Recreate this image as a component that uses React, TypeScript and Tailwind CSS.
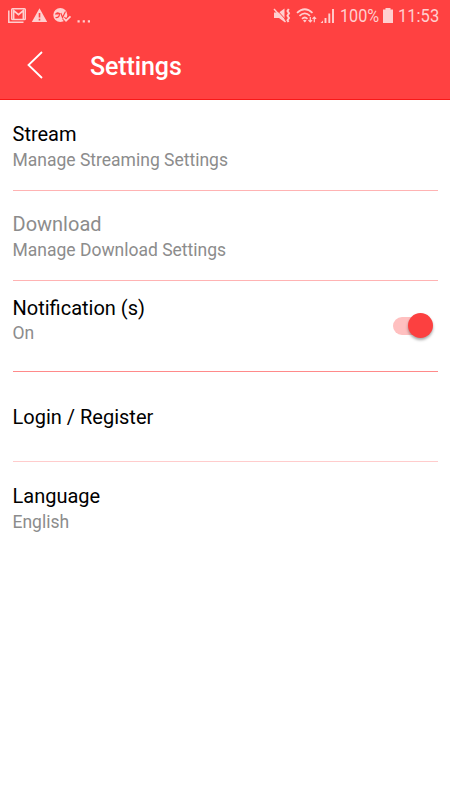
import React, { useState } from 'react';

interface SettingRowProps {
  title: string;
  subtitle?: string;
  className: string;
  muted?: boolean;
  onClick?: () => void;
  children?: React.ReactNode;
}

function StatusBar() {
  return (
    <div className="flex justify-between items-center h-8 text-[#ffcfcf]">
      {/* Notifications */}
      <svg className="w-[100px] h-8" viewBox="0 0 100 32" fill="none" stroke="currentColor">
        <path d="M8.800 10.500V22.200H23.500" strokeWidth="1.500" />
        <rect x="11.700" y="8.700" width="13.600" height="10.800" rx="0.800" strokeWidth="1.400" />
        <path d="M13.600 19V10.500L18.500 14.700L23.400 10.500V19" strokeWidth="1.700" />
        <path fill="currentColor" stroke="none" fillRule="evenodd" d="M39.500 8.200L47.200 22H31.800ZM38.700 13V17.500H40.300V13ZM38.700 18.800V20.400H40.300V18.800Z" />
        <circle cx="60.300" cy="15" r="7" fill="currentColor" stroke="none" />
        <path stroke="#ff4141" strokeWidth="1.200" d="M55 14H58.500M55.500 17.500Q59.500 18 59.500 13.500Q57 12 56 14M60.800 13L62.500 17.500L65.500 11.500" />
        <path stroke="#ff4141" strokeWidth="3.600" d="M63.500 18L66 20.800L71 15.500" />
        <path strokeWidth="1.700" d="M63.500 18.200L66 20.700L70.500 16.300" />
        <path fill="currentColor" stroke="none" d="M77.500 20.300h2.200v2.200h-2.200zM82.700 20.300h2.200v2.200h-2.200zM87.800 20.300h2.200v2.200h-2.200z" />
      </svg>

      <div className="flex items-center h-8">
        {/* Muted, wifi and signal */}
        <svg className="w-[67px] h-8" viewBox="270 0 67 32" fill="none" stroke="currentColor">
          <path fill="currentColor" stroke="none" d="M274 12.500H279L284.500 8.500V22L279 18H274Z" />
          <path stroke="#ff4141" strokeWidth="1" d="M276 9L286.500 20.500" />
          <path strokeWidth="1.400" d="M274 9L285.500 22" />
          <path strokeWidth="2" d="M288.800 9L287.500 11L289 13.300L287.500 15.700L289 18L287.500 20.300L288.500 22" />
          <path strokeWidth="1.700" d="M297 12.800Q304.800 5.700 312.500 12.800M299.500 15.900Q304.800 11 310 15.900M302 18.800Q304.800 16.200 307.500 18.800" />
          <path fill="currentColor" stroke="none" d="M303 20.600Q304.800 19 306.600 20.600L304.800 22.500Z" />
          <path strokeWidth="1.200" d="M310.300 17V22M308.500 20.100L310.300 22L312.100 20.100M314.300 22.200V17M312.500 18.900L314.300 17L316.100 18.900" />
          <path fill="currentColor" stroke="none" d="M320.500 23L323 20.500V23Z" />
          <path strokeWidth="1.900" d="M325.500 23V18M329.300 23V13.500M333 23V9" />
        </svg>
        <div className="w-[43px] pl-[3px]">
          <span className="block w-[44px] origin-left scale-x-[0.9] text-[18px] leading-8">100%</span>
        </div>
        <svg className="w-[18px] h-8" viewBox="380 0 18 32" fill="currentColor">
          <path d="M385.500 8H390.500V9.500H393V23H383V9.500H385.500Z" />
        </svg>
        <div className="w-[52px]">
          <span className="block w-[48px] origin-left scale-x-[0.92] text-[18px] leading-8">11:53</span>
        </div>
      </div>
    </div>
  );
}

function SettingRow({ title, subtitle, className, muted, onClick, children }: SettingRowProps) {
  return (
    <div onClick={onClick} className={`flex justify-between mx-[12.5px] border-b ${className}`}>
      <div>
        <div className={`text-[20px] leading-[26px] ${muted ? 'text-[#8c8c8c]' : 'text-black'}`}>{title}</div>
        {subtitle && <p className="text-[17.5px] leading-[25.5px] text-[#8c8c8c]">{subtitle}</p>}
      </div>
      {children}
    </div>
  );
}

export default function App() {
  const [notifications, setNotifications] = useState(true);

  return (
    <div className="w-full h-[800px] bg-white overflow-hidden font-['Roboto',sans-serif]">
      <header className="h-[100px] bg-[#ff4141] border-b border-[#f91818]">
        <StatusBar />
        <div className="flex items-center h-[67px]">
          <button className="w-[90px] h-full cursor-pointer" aria-label="Back">
            <svg className="w-[90px] h-[67px]" viewBox="0 32 90 67" fill="none" stroke="white" strokeWidth="1.800">
              <path d="M42 52L28.500 65L42 78" />
            </svg>
          </button>
          <h1 className="pt-[2px] text-white text-[25px] tracking-[-0.1px] font-medium leading-8">Settings</h1>
        </div>
      </header>

      <main>
        <SettingRow title="Stream" subtitle="Manage Streaming Settings" className="h-[91px] pt-[21px] border-[#ffb3b3] [&_p]:mt-px" />
        <SettingRow title="Download" subtitle="Manage Download Settings" muted className="h-[90px] pt-5 border-[#ffb3b3] [&_p]:mt-px" />
        <SettingRow
          title="Notification (s)"
          subtitle={notifications ? 'On' : 'Off'}
          className="h-[91px] pt-[14px] border-[#ff8a8a]"
        >
          <button
            role="switch"
            aria-checked={notifications}
            aria-label="Notifications"
            onClick={() => setNotifications(!notifications)}
            className={`flex items-center w-[36px] h-[18px] mt-[22px] mr-[8.5px] rounded-full cursor-pointer ${
              notifications ? 'justify-end bg-[#ffc0c0]' : 'bg-gray-300'
            }`}
          >
            <span className={`w-[25px] h-[25px] shrink-0 -mt-px rounded-full shadow-[0_2px_3px_rgba(0,0,0,0.35)] ${
              notifications ? 'bg-[#fc4040] -mr-1' : 'bg-white'
            }`} />
          </button>
        </SettingRow>
        <SettingRow title="Login / Register" className="h-[90px] pt-8 border-[#ffcccc]" />
        <SettingRow title="Language" subtitle="English" className="h-[90px] pt-[21px] border-transparent [&_p]:mt-px" />
      </main>
    </div>
  );
}
